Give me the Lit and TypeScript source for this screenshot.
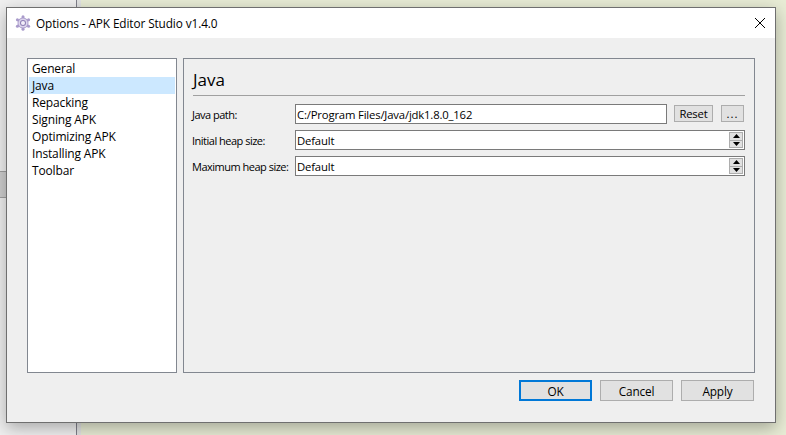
import { LitElement, html, css } from "lit";
import { customElement } from "lit/decorators.js";

@customElement("app-root")
export class AppRoot extends LitElement {
  static styles = css`
    :host {
      display: block;
      width: 786px;
      height: 435px;
      overflow: hidden;
      font-family: "Open Sans", "Noto Sans", sans-serif;
      font-size: 11.3px;
      letter-spacing: -0.17px;
      color: #000;
    }
    .desktop {
      position: relative;
      width: 786px;
      height: 435px;
      background: #e8ecd5;
      overflow: hidden;
    }
    .back-window {
      position: absolute;
      left: 0;
      top: 0;
      width: 76px;
      height: 435px;
      background: #f0f0f0;
      border-right: 1px solid #7f7f8a;
    }
    .back-strip {
      position: absolute;
      left: 77px;
      top: 0;
      width: 4px;
      height: 435px;
      background: #e2e3e3;
    }
    .back-tab {
      position: absolute;
      left: 0;
      top: 171px;
      width: 76px;
      height: 27px;
      box-sizing: border-box;
      background: #cfcfcf;
      border-top: 1px solid #a0a0a0;
      border-bottom: 1px solid #a0a0a0;
    }
    .dialog {
      position: absolute;
      left: 6px;
      top: 7px;
      width: 770px;
      height: 416px;
      box-sizing: border-box;
      border: 1px solid #6f6f6f;
      background: #efefef;
      box-shadow: 0 5px 16px rgba(0, 0, 0, 0.3);
      display: flex;
      flex-direction: column;
    }
    .titlebar {
      height: 30px;
      flex: none;
      background: #fff;
      display: flex;
      align-items: center;
      padding: 0 9px 0 8px;
      gap: 5px;
    }
    .titlebar .title {
      flex: 1;
      font-size: 11.8px;
      letter-spacing: -0.1px;
      white-space: nowrap;
    }
    .body {
      flex: 1;
      display: flex;
      gap: 6px;
      padding: 20px 20px 0 20px;
      height: 315px;
    }
    .list {
      width: 150px;
      height: 315px;
      box-sizing: border-box;
      border: 1px solid #828790;
      background: #fff;
      padding: 1px;
      flex: none;
    }
    .item {
      height: 17px;
      line-height: 17px;
      padding-left: 3px;
      font-size: 12px;
      letter-spacing: -0.15px;
      white-space: nowrap;
    }
    .item.sel {
      background: #cce8ff;
    }
    .panel {
      width: 572px;
      height: 315px;
      box-sizing: border-box;
      border: 1px solid #828790;
      padding: 0 9px;
      flex: none;
    }
    .heading {
      font-size: 17px;
      letter-spacing: 0;
      height: 37px;
      line-height: 42px;
      box-sizing: border-box;
      border-bottom: 1px solid #a0a0a0;
    }
    .rows {
      display: grid;
      grid-template-columns: 102px 1fr;
      row-gap: 6px;
      margin-top: 8px;
    }
    .label {
      align-self: center;
      white-space: nowrap;
      margin-left: -1px;
      font-size: 11px;
      letter-spacing: -0.5px;
    }
    .input {
      height: 20px;
      box-sizing: border-box;
      border: 1px solid #7a7a7a;
      background: #fff;
      line-height: 18px;
      padding: 1px 0 0 1px;
      white-space: nowrap;
      position: relative;
    }
    .pathrow {
      display: flex;
      align-items: flex-start;
    }
    .pathrow .input {
      width: 372px;
      flex: none;
    }
    .tool {
      height: 17px;
      box-sizing: border-box;
      background: #e1e1e1;
      border: 1px solid #adadad;
      text-align: center;
      line-height: 15px;
      margin-top: 1px;
    }
    .reset {
      width: 39px;
      margin-left: 7px;
    }
    .more {
      width: 23px;
      margin-left: 8px;
      letter-spacing: 1px;
    }
    .spin {
      position: absolute;
      right: 1px;
      top: 1px;
      width: 14px;
      height: 16px;
      display: flex;
      flex-direction: column;
    }
    .spin span {
      flex: 1;
      box-sizing: border-box;
      background: #e1e1e1;
      border: 1px solid #adadad;
      display: flex;
      align-items: center;
      justify-content: center;
    }
    .spin span + span {
      border-top: none;
    }
    .spin svg {
      display: block;
    }
    .footer {
      display: flex;
      justify-content: flex-end;
      gap: 8px;
      padding: 7px 21px 21px 0;
      flex: none;
    }
    .btn {
      width: 73px;
      height: 21px;
      box-sizing: border-box;
      background: #e1e1e1;
      border: 1px solid #adadad;
      text-align: center;
      line-height: 20px;
      font-size: 11.8px;
    }
    .btn.def {
      border: 2px solid #0078d7;
      line-height: 18px;
    }
  `;

  render() {
    const items = ["General", "Java", "Repacking", "Signing APK", "Optimizing APK", "Installing APK", "Toolbar"];
    const spin = html`<div class="spin">
      <span><svg width="7" height="4" viewBox="0 0 7 4"><path d="M3.5 0L7 4H0z" fill="#000"/></svg></span>
      <span><svg width="7" height="4" viewBox="0 0 7 4"><path d="M0 0H7L3.5 4z" fill="#000"/></svg></span>
    </div>`;
    return html`<div class="desktop">
      <div class="back-window"><div class="back-tab"></div></div>
      <div class="back-strip"></div>
      <div class="dialog">
        <div class="titlebar">
          <svg width="16" height="16" viewBox="0 0 16 16">
            <path d="M8 1.800L13.400 4.900V11.100L8 14.200 2.600 11.100V4.900z" fill="#a99bcb"/>
            <g fill="#a99bcb">
              <circle cx="8" cy="1.700" r="1.500"/>
              <circle cx="13.600" cy="4.800" r="1.500"/>
              <circle cx="13.600" cy="11.200" r="1.500"/>
              <circle cx="8" cy="14.300" r="1.500"/>
              <circle cx="2.400" cy="11.200" r="1.500"/>
              <circle cx="2.400" cy="4.800" r="1.500"/>
            </g>
            <circle cx="8" cy="8" r="4.600" fill="#dcd5ec"/>
            <circle cx="8" cy="8" r="3" fill="#8f80b5"/>
            <circle cx="8" cy="8" r="2" fill="#f2eef9"/>
          </svg>
          <div class="title">Options - APK Editor Studio v1.4.0</div>
          <svg width="12" height="12" viewBox="0 0 12 12"><path d="M1 1L11 11M11 1L1 11" stroke="#000" stroke-width="1" fill="none"/></svg>
        </div>
        <div class="body">
          <div class="list">
            ${items.map((t) => html`<div class="item ${t === "Java" ? "sel" : ""}">${t}</div>`)}
          </div>
          <div class="panel">
            <div class="heading">Java</div>
            <div class="rows">
              <div class="label">Java path:</div>
              <div class="pathrow">
                <div class="input">C:/Program Files/Java/jdk1.8.0_162</div>
                <div class="tool reset">Reset</div>
                <div class="tool more">...</div>
              </div>
              <div class="label">Initial heap size:</div>
              <div class="input">Default${spin}</div>
              <div class="label">Maximum heap size:</div>
              <div class="input">Default${spin}</div>
            </div>
          </div>
        </div>
        <div class="footer">
          <div class="btn def">OK</div>
          <div class="btn">Cancel</div>
          <div class="btn">Apply</div>
        </div>
      </div>
    </div>`;
  }
}
